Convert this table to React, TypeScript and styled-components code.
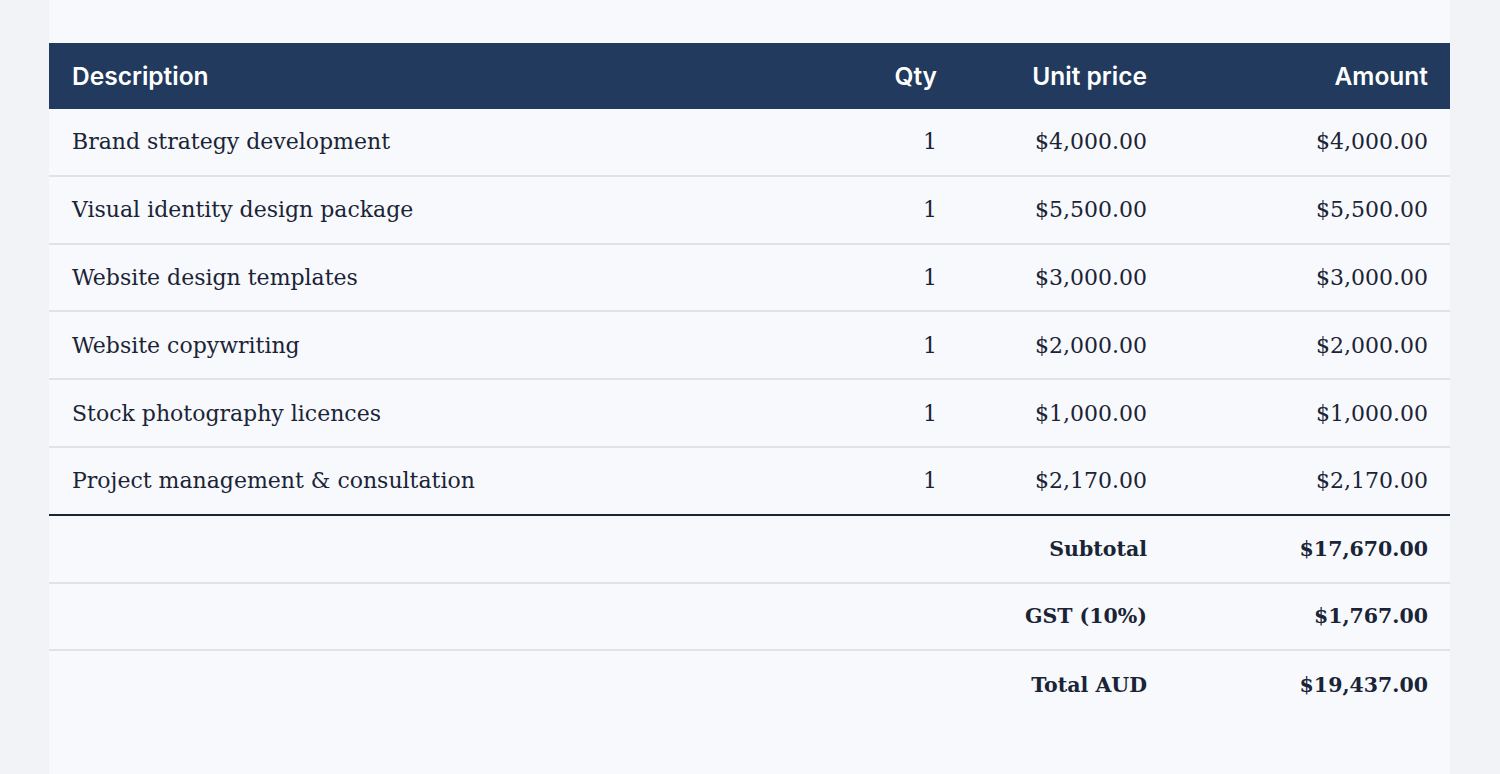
import styled, { createGlobalStyle } from "styled-components";

const GlobalStyle = createGlobalStyle`
  html, body {
    margin: 0;
    padding: 0;
    background: #f1f3f7;
  }
`

const items = [
  { desc: "Brand strategy development", qty: 1, price: "$4,000.00", amount: "$4,000.00" },
  { desc: "Visual identity design package", qty: 1, price: "$5,500.00", amount: "$5,500.00" },
  { desc: "Website design templates", qty: 1, price: "$3,000.00", amount: "$3,000.00" },
  { desc: "Website copywriting", qty: 1, price: "$2,000.00", amount: "$2,000.00" },
  { desc: "Stock photography licences", qty: 1, price: "$1,000.00", amount: "$1,000.00" },
  { desc: "Project management & consultation", qty: 1, price: "$2,170.00", amount: "$2,170.00" },
]

const totals = [
  { label: "Subtotal", value: "$17,670.00" },
  { label: "GST (10%)", value: "$1,767.00" },
  { label: "Total AUD", value: "$19,437.00" },
]

export default function App() {
  return (
    <>
      <GlobalStyle />
      <Page>
        <Panel>
          <HeadRow>
            <Cell>Description</Cell>
            <Cell $right>Qty</Cell>
            <Cell $right>Unit price</Cell>
            <Cell $right>Amount</Cell>
          </HeadRow>
          {items.map((item, i) => (
            <Row key={item.desc} $last={i === items.length - 1}>
              <Cell>{item.desc}</Cell>
              <Cell $right>{item.qty}</Cell>
              <Cell $right>{item.price}</Cell>
              <Cell $right>{item.amount}</Cell>
            </Row>
          ))}
          {totals.map((t, i) => (
            <TotalRow key={t.label} $last={i === totals.length - 1}>
              <Cell />
              <Cell />
              <Cell $right>{t.label}</Cell>
              <Cell $right>{t.value}</Cell>
            </TotalRow>
          ))}
        </Panel>
      </Page>
    </>
  )
}

const Page = styled.div`
  min-height: 100vh;
  padding-left: 49px;
  box-sizing: border-box;
  display: flex;
`

const Panel = styled.div`
  width: 1401px;
  min-height: 774px;
  background: #f7f9fc;
  padding-top: 43px;
  box-sizing: border-box;
`

const Grid = styled.div`
  display: grid;
  grid-template-columns: 1fr 100px 210px 281px;
  align-items: center;
  box-sizing: border-box;
`

const Cell = styled.div<{ $right?: boolean }>`
  padding: 0 22px 0 23px;
  text-align: ${p => p.$right ? "right" : "left"};
  white-space: nowrap;
`

const HeadRow = styled(Grid)`
  height: 66px;
  background: #213a5e;
  color: #ffffff;
  font-family: Inter, "Liberation Sans", sans-serif;
  font-weight: 600;
  font-size: 24.5px;
`

const Row = styled(Grid)<{ $last?: boolean }>`
  height: 67.8px;
  color: #1a2436;
  font-family: "DejaVu Serif", serif;
  font-size: 22px;
  border-bottom: ${p => p.$last ? "2px solid #1b2536" : "2px solid #dfe2e7"};
`

const TotalRow = styled(Grid)<{ $last?: boolean }>`
  height: 67.8px;
  color: #1a2436;
  font-family: "DejaVu Serif", serif;
  font-weight: 700;
  font-size: 20.5px;
  border-bottom: ${p => p.$last ? "none" : "2px solid #dfe2e7"};
`
